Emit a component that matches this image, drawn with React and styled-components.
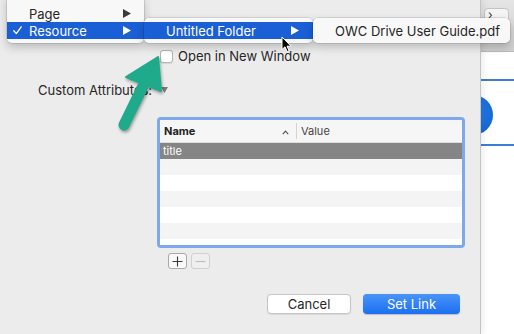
import React from "react";
import styled, { createGlobalStyle } from "styled-components";

const Global = createGlobalStyle`
  html, body { margin: 0; padding: 0; }
  body { width: 514px; height: 334px; overflow: hidden; font-family: Inter, "Noto Sans", sans-serif; color: #262626; }
  * { box-sizing: border-box; }
`;

const Screen = styled.div`
  position: relative;
  width: 514px;
  height: 334px;
  display: flex;
  overflow: hidden;
  background: #fff;
`;

const Sheet = styled.div`
  position: relative;
  z-index: 2;
  width: 481px;
  flex: none;
  background: #ececec;
  border-right: 1px solid #c4c4c4;
  box-shadow: 2px 0 6px rgba(0, 0, 0, 0.08);
  display: flex;
  flex-direction: column;
`;

const CheckRow = styled.label`
  display: flex;
  align-items: center;
  gap: 5px;
  margin-top: 50px;
  padding-left: 160px;
  height: 13px;
  font-size: 13px;
  line-height: 13px;
`;

const Checkbox = styled.span`
  width: 13px;
  height: 13px;
  border: 1px solid #b4b4b4;
  border-radius: 3px;
  background: #fff;
  box-shadow: 0 0.5px 1px rgba(0, 0, 0, 0.1);
`;

const AttrRow = styled.div`
  display: flex;
  align-items: center;
  margin-top: 19px;
  padding-left: 38px;
  height: 16px;
  font-size: 13px;
`;

const Disclosure = styled.svg`
  margin-left: 9px;
  width: 7px;
  height: 6px;
`;

const TableWrap = styled.div`
  margin: 19px 0 0 157px;
  width: 308px;
  height: 131px;
  border: 3px solid #7ea8ec;
  border-radius: 4px;
  overflow: hidden;
  background: #fff;
  display: flex;
  flex-direction: column;
`;

const Header = styled.div`
  display: flex;
  height: 23px;
  flex: none;
  background: #f6f6f6;
  border-bottom: 1px solid #dcdcdc;
  font-size: 11px;
`;

const HeadCell = styled.div`
  position: relative;
  display: flex;
  align-items: center;
  width: ${(p) => p.$w || "auto"};
  flex: ${(p) => (p.$w ? "none" : "1")};
  padding-left: 4px;
  font-weight: ${(p) => (p.$bold ? 700 : 400)};
  color: ${(p) => (p.$bold ? "#222" : "#444")};
  border-right: ${(p) => (p.$sep ? "1px solid #d4d4d4" : "none")};
  margin: 3px 0;
`;

const SortCaret = styled.svg`
  position: absolute;
  right: 7px;
  top: 7px;
  width: 7px;
  height: 5px;
`;

const Row = styled.div`
  height: 16px;
  flex: none;
  display: flex;
  align-items: center;
  padding-left: 3px;
  font-size: 11px;
  background: ${(p) => (p.$selected ? "#858585" : p.$alt ? "#f4f4f4" : "#ffffff")};
  color: ${(p) => (p.$selected ? "#fff" : "#222")};
`;

const PlusMinus = styled.div`
  display: flex;
  gap: 4px;
  margin: 5px 0 0 168px;
`;

const SmallBtn = styled.div`
  width: 19px;
  height: 16px;
  border: 1px solid ${(p) => (p.$disabled ? "#d0d0d0" : "#a9a9a9")};
  border-radius: 3px;
  background: ${(p) => (p.$disabled ? "#efefef" : "#f8f8f8")};
  display: flex;
  align-items: center;
  justify-content: center;
`;

const ButtonRow = styled.div`
  display: flex;
  justify-content: flex-end;
  gap: 12px;
  margin-top: 25px;
  padding-right: 20px;
`;

const Button = styled.div`
  width: ${(p) => p.$w}px;
  height: 20px;
  border-radius: 4px;
  display: flex;
  align-items: center;
  justify-content: center;
  font-size: 13px;
  ${(p) =>
    p.$primary
      ? `background: linear-gradient(#4a94f9, #1b6ff1); color: #fff; box-shadow: 0 0.5px 1px rgba(0,0,0,0.2);`
      : `background: #fff; color: #262626; border: 1px solid #c6c6c6; box-shadow: 0 0.5px 1px rgba(0,0,0,0.08);`}
`;

const Backdrop = styled.div`
  flex: 1;
  display: flex;
  flex-direction: column;
`;

const Toolbar = styled.div`
  height: 52px;
  flex: none;
  background: linear-gradient(#e5e5e5, #cfcfcf);
  border-bottom: 1px solid #bcbcbc;
  padding: 8px 0 0 3px;
`;

const ToolBtn = styled.div`
  width: 25px;
  height: 16px;
  border: 1px solid #c4c4c4;
  border-radius: 4px;
  background: #f4f4f4;
  font-size: 12px;
  line-height: 12px;
  padding-left: 3px;
  color: #333;
`;

const Canvas = styled.div`
  flex: 1;
  background: #fff;
`;

const Menu = styled.div`
  position: absolute;
  z-index: 5;
  left: ${(p) => p.$x}px;
  top: ${(p) => p.$y}px;
  width: ${(p) => p.$w}px;
  padding: ${(p) => p.$pt}px 0 4px;
  background: rgba(248, 248, 248, 0.98);
  border-radius: 5px;
  box-shadow: 0 0 0 0.5px rgba(0, 0, 0, 0.18), 0 4px 10px rgba(0, 0, 0, 0.22);
  font-size: 13px;
`;

const MenuItem = styled.div`
  position: relative;
  height: 17px;
  display: flex;
  align-items: center;
  padding-left: ${(p) => p.$pl}px;
  background: ${(p) => (p.$active ? "#1b5fd6" : "transparent")};
  color: ${(p) => (p.$active ? "#fff" : "#262626")};
`;

const Check = styled.svg`
  position: absolute;
  left: 6px;
  top: 4px;
  width: 9px;
  height: 9px;
`;

const SubArrow = styled.svg`
  position: absolute;
  right: ${(p) => p.$r}px;
  top: 4px;
  width: 8px;
  height: 9px;
`;

const Overlay = styled.svg`
  position: absolute;
  z-index: 6;
  left: ${(p) => p.$x}px;
  top: ${(p) => p.$y}px;
  overflow: visible;
`;

const Arrow = ({ r, color }) => (
  <SubArrow $r={r} viewBox="0 0 8 9">
    <polygon points="0,0 8,4.5 0,9" fill={color} />
  </SubArrow>
);

export default function App() {
  return (
    <>
      <Global />
      <Screen>
        <Sheet>
          <CheckRow>
            <Checkbox />
            Open in New Window
          </CheckRow>
          <AttrRow>
            Custom Attributes:
            <Disclosure viewBox="0 0 7 6">
              <polygon points="0,0 7,0 3.5,6" fill="#7a7a7a" />
            </Disclosure>
          </AttrRow>
          <TableWrap>
            <Header>
              <HeadCell $w="137px" $bold $sep>
                Name
                <SortCaret viewBox="0 0 7 5">
                  <polyline points="0.8,4.2 3.5,1.2 6.2,4.2" fill="none" stroke="#555" strokeWidth="1.2" />
                </SortCaret>
              </HeadCell>
              <HeadCell>Value</HeadCell>
            </Header>
            <Row $selected>title</Row>
            <Row $alt />
            <Row />
            <Row $alt />
            <Row />
            <Row $alt />
            <Row />
          </TableWrap>
          <PlusMinus>
            <SmallBtn>
              <svg width="11" height="11" viewBox="0 0 11 11">
                <path d="M5.5 0.5v10M0.5 5.5h10" stroke="#3a3a3a" strokeWidth="1.1" />
              </svg>
            </SmallBtn>
            <SmallBtn $disabled>
              <svg width="11" height="11" viewBox="0 0 11 11">
                <path d="M0.5 5.5h10" stroke="#bdbdbd" strokeWidth="1.1" />
              </svg>
            </SmallBtn>
          </PlusMinus>
          <ButtonRow>
            <Button $w={84}>Cancel</Button>
            <Button $w={97} $primary>Set Link</Button>
          </ButtonRow>
        </Sheet>
        <Backdrop>
          <Toolbar>
            <ToolBtn>›</ToolBtn>
          </Toolbar>
          <Canvas>
            <svg width="33" height="281" viewBox="0 0 33 281">
              <defs>
                <radialGradient id="dot" cx="0.4" cy="0.4" r="0.7">
                  <stop offset="0" stopColor="#2d86ee" />
                  <stop offset="1" stopColor="#1364d2" />
                </radialGradient>
              </defs>
              <rect x="0" y="27" width="33" height="2" fill="#3c7ddc" />
              <rect x="0" y="92" width="33" height="2" fill="#3c7ddc" />
              <circle cx="-8" cy="63" r="20" fill="url(#dot)" />
            </svg>
          </Canvas>
        </Backdrop>

        <Menu $x={7} $y={-6} $w={137} $pt={11}>
          <MenuItem $pl={22}>
            Page
            <Arrow r={13} color="#3a3a3a" />
          </MenuItem>
          <MenuItem $pl={22} $active>
            <Check viewBox="0 0 9 9">
              <polyline points="0.8,4.8 3.3,7.6 8.2,0.8" fill="none" stroke="#fff" strokeWidth="1.3" strokeLinecap="round" strokeLinejoin="round" />
            </Check>
            Resource
            <Arrow r={13} color="#fff" />
          </MenuItem>
        </Menu>
        <Menu $x={144} $y={18} $w={169} $pt={4}>
          <MenuItem $pl={22} $active>
            Untitled Folder
            <Arrow r={14} color="#fff" />
          </MenuItem>
        </Menu>
        <Menu $x={313} $y={18} $w={197} $pt={4}>
          <MenuItem $pl={22}>OWC Drive User Guide.pdf</MenuItem>
        </Menu>

        <Overlay $x={281} $y={36} width="12" height="17" viewBox="0 0 12 17">
          <path d="M1 1 L1 13.5 L4 10.8 L6.2 15.6 L8.1 14.8 L6 10.2 L10 10.2 Z" fill="#000" stroke="#fff" strokeWidth="1" strokeLinejoin="round" />
        </Overlay>

        <Overlay
          $x={100}
          $y={50}
          width="80"
          height="95"
          viewBox="100 50 80 95"
          style={{ filter: "drop-shadow(1px 2px 1.5px rgba(0,0,0,0.35))" }}
        >
          <line x1="145" y1="82" x2="124" y2="125" stroke="#1fab8b" strokeWidth="11" strokeLinecap="round" />
          <polygon points="158,57 126,77 161,91" fill="#1fab8b" strokeLinejoin="round" stroke="#1fab8b" strokeWidth="2" />
        </Overlay>
      </Screen>
    </>
  );
}
